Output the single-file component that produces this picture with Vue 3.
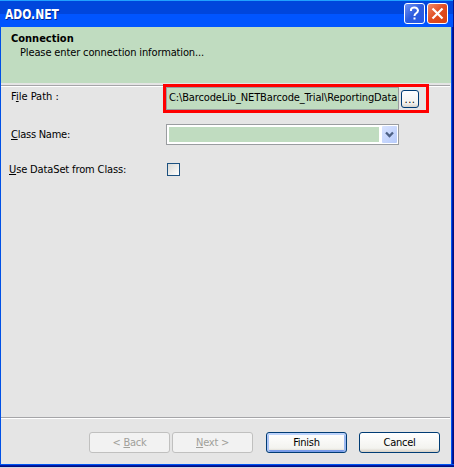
<script setup>
import { ref } from 'vue'

const path = ref('C:\\BarcodeLib_NETBarcode_Trial\\ReportingData')
</script>

<template>
  <div class="window">
    <header class="titlebar">
      <h1>ADO.NET</h1>
      <button class="caption help" aria-label="Help">
        <svg width="21" height="21" viewBox="0 0 21 21">
          <path d="M7 8V6.5Q7.5 4.5 10.5 4.5T14 7.5Q14 9 12 10.3Q10.5 11.2 10.5 13" fill="none" stroke="#fff" stroke-width="2" />
          <rect x="9.5" y="14.5" width="2" height="2" fill="#fff" />
        </svg>
      </button>
      <button class="caption close" aria-label="Close">
        <svg width="21" height="21" viewBox="0 0 21 21">
          <path d="M5.5 5.5L15.5 15.5M15.5 5.5L5.5 15.5" stroke="#fff" stroke-width="2.2" />
        </svg>
      </button>
    </header>
    <main class="body">
      <section class="banner">
        <h2>Connection</h2>
        <p>Please enter connection information...</p>
      </section>
      <hr class="rule">
      <section class="form">
        <div class="row path-row">
          <label class="file">F<u>i</u>le Path :</label>
          <div class="highlight">
            <div class="field"><span>{{ path }}</span></div>
            <button class="browse">...</button>
          </div>
        </div>
        <div class="row class-row">
          <label class="class-name"><u>C</u>lass Name:</label>
          <div class="combo">
            <div class="value"></div>
            <div class="arrow">
              <svg width="15" height="17" viewBox="0 0 15 17">
                <path d="M4 6.5L7.5 10L11 6.5" fill="none" stroke="#4d6185" stroke-width="2.3" />
              </svg>
            </div>
          </div>
        </div>
        <div class="row check-row">
          <label class="dataset"><u>U</u>se DataSet from Class:</label>
          <div class="check"></div>
        </div>
      </section>
      <hr class="rule">
      <footer class="actions">
        <button class="btn disabled back" disabled><span>&lt; <u>B</u>ack</span></button>
        <button class="btn disabled next" disabled><span><u>N</u>ext &gt;</span></button>
        <button class="btn finish"><span>Finish</span></button>
        <button class="btn cancel"><span>Cancel</span></button>
      </footer>
    </main>
  </div>
</template>

<style>
body { margin: 0; background: #d0d5e3; overflow: hidden; }
</style>

<style scoped>
* { box-sizing: border-box; }
.window {
  width: 454px;
  height: 467px;
  display: flex;
  flex-direction: column;
  background: linear-gradient(90deg, #0050e6 0 1px, transparent 1px 451px, #0055f0 451px 452px, #0019a8 452px 453px, #00107e 453px), #e5e5e5;
  font: 11px/14px "DejaVu Sans Condensed", "DejaVu Sans", sans-serif;
  font-stretch: condensed;
  letter-spacing: -0.13px;
  color: #000;
}
h1, h2, p { margin: 0; }
button { margin: 0; padding: 0; font: inherit; color: inherit; }
u { text-decoration: underline; text-decoration-thickness: 1px; text-underline-offset: 1px; }
.titlebar {
  height: 27px;
  flex: none;
  display: flex;
  align-items: flex-start;
  gap: 2px;
  padding: 3px 6px 0 5px;
  background: linear-gradient(#20a0ff 0 1px, #0046dc 1px 14px, #0055ff 14px);
  border-right: 1px solid #001590;
}
h1 {
  flex: 1;
  padding-top: 3px;
  font-size: 13.5px;
  line-height: 16px;
  letter-spacing: 0;
  transform: scaleX(0.885);
  transform-origin: 0 0;
  color: #fff;
  text-shadow: 1px 1px 0 #002a92;
}
.caption {
  width: 21px;
  height: 21px;
  border: 1px solid #fff;
  border-radius: 3px;
  display: flex;
  align-items: center;
  justify-content: center;
}
.caption svg { flex: none; }
.help { background: linear-gradient(135deg, #6f92f5, #2c5bdd 50%, #2458e8); }
.close { background: linear-gradient(135deg, #f08a68, #e04c20 50%, #d84310); }
.titlebar { padding-right: 5px; }
.body {
  flex: 1;
  margin: 0 3px 0 1px;
  display: flex;
  flex-direction: column;
}
.banner {
  height: 56px;
  flex: none;
  margin-bottom: 2px;
  padding: 5px 0 0 10px;
  background: #c0dcc0;
}
h2 { font-size: 11px; line-height: 14px; letter-spacing: 0; }
.banner p { margin: 0 0 0 9px; }
.rule {
  flex: none;
  margin: 0 1px 0 0;
  height: 2px;
  border: 0;
  background: linear-gradient(#a5a5a8 0 1px, #fff 1px);
}
.form { height: 330px; flex: none; }
.row { display: flex; align-items: flex-start; }
.row label { width: 162px; flex: none; white-space: nowrap; }
.path-row { height: 37px; }
.path-row label { padding: 3px 0 0 10px; letter-spacing: 0; }
.highlight {
  width: 266px;
  height: 29px;
  margin-top: -3px;
  border: 3px solid #f00;
  display: flex;
  align-items: flex-start;
  gap: 2px;
}
.field {
  width: 233px;
  height: 23px;
  border: 1px solid #9a9da0;
  background: #c0dcc0;
  padding: 3px 1px 3px 2px;
}
.field span { display: block; overflow: hidden; white-space: nowrap; }
.browse {
  width: 18px;
  height: 18px;
  margin-top: 3px;
  border: 1px solid #003c74;
  border-radius: 3px;
  background: linear-gradient(#fff, #f4f4f0 75%, #d5d3cc);
  line-height: 15px;
  letter-spacing: 0.5px;
}
.class-row { height: 39px; }
.class-row label { padding: 4px 0 0 10px; letter-spacing: -0.25px; }
.combo {
  width: 233px;
  height: 21px;
  margin-left: 3px;
  padding: 1px;
  border: 1px solid #9a9da0;
  background: #fff;
  display: flex;
  justify-content: space-between;
}
.value { width: 210px; height: 15px; margin: 1px 0 0 1px; background: #c0dcc0; }
.arrow {
  width: 15px;
  height: 17px;
  border-radius: 1px;
  background: linear-gradient(135deg, #d8e3ff, #b7cbfb);
}
.arrow svg { display: block; }
.check-row label { padding-left: 8px; }
.check {
  width: 13px;
  height: 13px;
  margin-left: 4px;
  border: 1px solid #1c5180;
  background: linear-gradient(135deg, #d9d9d5, #fff);
}
.actions { display: flex; padding: 13px 0 0 88px; }
.btn {
  width: 81px;
  height: 21px;
  border: 1px solid #003c74;
  border-radius: 3px;
  background: linear-gradient(#fff, #f3f3ef 80%, #d6d0c5);
  line-height: 18px;
  letter-spacing: -0.25px;
  padding-top: 1px;
  white-space: nowrap;
}
.disabled { color: #a0a09a; border-color: #c0c0bf; background: #f2f2f2; }
.next { margin-left: 2px; }
.finish { margin-left: 13px; box-shadow: inset 0 2px #bdd3fb, inset 2px 0 #adc5f5, inset -2px 0 #9bb8f0, inset 0 -2px #789be8; }
.cancel { margin-left: 12px; }
.window::after {
  content: "";
  height: 3px;
  flex: none;
  background: linear-gradient(#0055f0 0 1px, #0019a8 1px 2px, #00107e 2px);
}
</style>
